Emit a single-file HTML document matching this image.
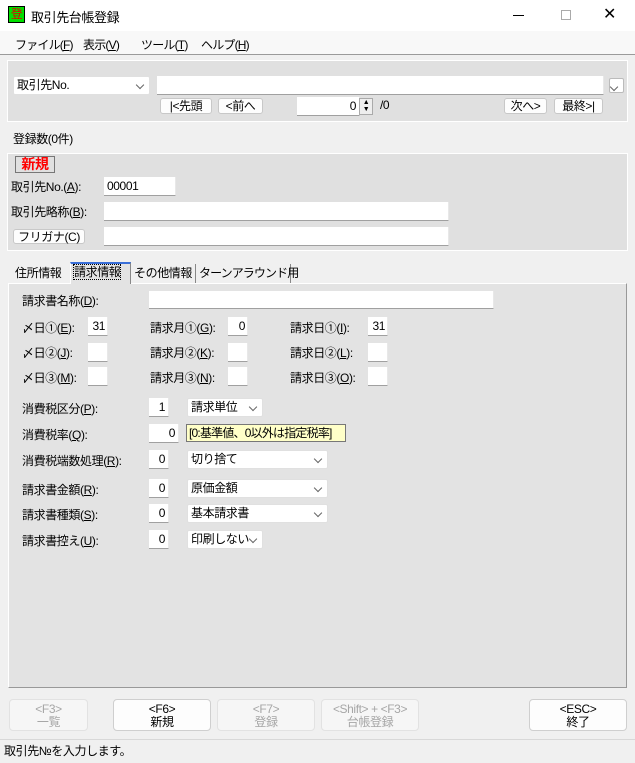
<!DOCTYPE html><html><head><meta charset="utf-8"><style>
*{box-sizing:border-box;margin:0;padding:0}
body{width:635px;height:763px;background:#f0f0f0;font-family:"Liberation Sans","Noto Sans CJK JP",sans-serif;font-size:12px;letter-spacing:-0.4px;color:#000;position:relative;overflow:hidden}
.a{position:absolute;white-space:nowrap}
.in{position:absolute;background:#fff;border-bottom:1px solid #a0a0a0;border-right:1px solid #e8e8e8;height:19px;font-size:12px;line-height:18px;padding:0 3px}
.btn{position:absolute;background:#fdfdfd;border:1px solid #c8c8c8;border-radius:3px;height:16px;font-size:12px;line-height:14px;text-align:center}
.sel{position:absolute;background:#fff;border:1px solid #e0e0e0;border-radius:2px;height:19px;line-height:17px;padding-left:3px}
.sel:after{content:"";position:absolute;right:6px;top:5px;width:5px;height:5px;border-right:1px solid #666;border-bottom:1px solid #666;transform:rotate(45deg)}
.r{text-align:right}
.fb{position:absolute;top:699px;height:32px;border:1px solid #cfcfcf;border-radius:4px;text-align:center;line-height:13px;padding-top:3px;font-size:12px}
.dis{background:#f6f6f6;color:#a6a6a6;border-color:#e2e2e2}
.en{background:#fdfdfd}
u{text-decoration:underline}
</style></head><body>
<div class="a" style="left:0;top:0;width:635px;height:31px;background:#fff"></div>
<div class="a" style="left:8px;top:6px;width:17px;height:17px;background:#00e000;border:1px solid #000;color:#e00000;font-size:12px;line-height:14px;text-align:center">登</div>
<div class="a" style="left:31px;top:7px;font-size:13px">取引先台帳登録</div>
<div class="a" style="left:513px;top:15px;width:11px;height:1px;background:#000"></div>
<div class="a" style="left:561px;top:10px;width:10px;height:10px;border:1px solid #aaa"></div>
<div class="a" style="left:603px;top:4px;font-size:16px;font-weight:300">✕</div>
<div class="a" style="left:0;top:31px;width:635px;height:24px;background:#f8f8f8;border-bottom:1px solid #9a9a9a"></div>
<div class="a" style="left:15px;top:36px;letter-spacing:-0.8px">ファイル(<u>F</u>)</div>
<div class="a" style="left:83px;top:36px;letter-spacing:-0.8px">表示(<u>V</u>)</div>
<div class="a" style="left:141px;top:36px;letter-spacing:-0.8px">ツール(<u>T</u>)</div>
<div class="a" style="left:201px;top:36px;letter-spacing:-0.8px">ヘルプ(<u>H</u>)</div>

<div class="a" style="left:7px;top:60px;width:621px;height:62px;background:#e0e0e0;border:1px solid #fff"></div>
<div class="sel" style="left:13px;top:76px;width:137px;height:19px">取引先No.</div>
<div class="in" style="left:157px;top:76px;width:447px"></div>
<div class="sel" style="left:609px;top:78px;width:15px;height:15px;border-color:#bbb"></div>
<div class="btn" style="left:160px;top:98px;width:52px">|&lt;先頭</div>
<div class="btn" style="left:218px;top:98px;width:45px">&lt;前へ</div>
<div class="in r" style="left:297px;top:97px;width:63px;padding-right:3px">0</div>
<div class="a" style="left:359px;top:98px;width:14px;height:17px;background:#eee;border:1px solid #aaa;font-size:7px;line-height:7px;text-align:center">▲<br>▼</div>
<div class="a" style="left:380px;top:98px">/0</div>
<div class="btn" style="left:504px;top:98px;width:43px">次へ&gt;</div>
<div class="btn" style="left:554px;top:98px;width:49px">最終&gt;|</div>

<div class="a" style="left:13px;top:130px">登録数(0件)</div>
<div class="a" style="left:7px;top:153px;width:621px;height:98px;background:#e0e0e0;border:1px solid #fff"></div>
<div class="a" style="left:15px;top:156px;width:40px;height:17px;border:1px solid #777;color:#f00;font-weight:bold;font-size:14px;line-height:15px;text-align:center">新規</div>
<div class="a" style="left:11px;top:178px">取引先No.(<u>A</u>):</div>
<div class="in" style="left:104px;top:177px;width:72px">00001</div>
<div class="a" style="left:11px;top:203px">取引先略称(<u>B</u>):</div>
<div class="in" style="left:104px;top:202px;width:345px"></div>
<div class="btn" style="left:13px;top:229px;width:72px;height:15px">フリガナ(C)</div>
<div class="in" style="left:104px;top:227px;width:345px"></div>

<div class="a" style="left:8px;top:283px;width:619px;height:405px;background:#e3e3e3;border:1px solid #fff;border-right-color:#999;border-bottom-color:#999"></div>
<div class="a" style="left:11px;top:264px;width:58px;height:19px;padding-left:4px">住所情報</div>
<div class="a" style="left:70px;top:262px;width:61px;height:22px;background:#e3e3e3;border:1px solid #fff;border-right-color:#888;border-bottom:none;border-top:2px solid #3a6fd8;padding-left:3px;line-height:17px"><span style="outline:1px dotted #000">請求情報</span></div>
<div class="a" style="left:131px;top:264px;width:65px;height:19px;border-right:1px solid #888;padding-left:3px">その他情報</div>
<div class="a" style="left:197px;top:264px;width:94px;height:19px;border-right:1px solid #888;padding-left:2px;letter-spacing:-0.9px">ターンアラウンド用</div>

<div class="a" style="left:22px;top:292px">請求書名称(<u>D</u>):</div>
<div class="in" style="left:149px;top:291px;width:345px;height:18px"></div>

<div class="a" style="left:22px;top:319px">〆日①(<u>E</u>):</div><div class="in r" style="left:88px;top:317px;width:20px;padding:0 2px 0 0">31</div>
<div class="a" style="left:150px;top:319px">請求月①(<u>G</u>):</div><div class="in r" style="left:228px;top:317px;width:20px;padding:0 2px 0 0">0</div>
<div class="a" style="left:290px;top:319px">請求日①(<u>I</u>):</div><div class="in r" style="left:368px;top:317px;width:20px;padding:0 2px 0 0">31</div>
<div class="a" style="left:22px;top:344px">〆日②(<u>J</u>):</div><div class="in" style="left:88px;top:343px;width:20px"></div>
<div class="a" style="left:150px;top:344px">請求月②(<u>K</u>):</div><div class="in" style="left:228px;top:343px;width:20px"></div>
<div class="a" style="left:290px;top:344px">請求日②(<u>L</u>):</div><div class="in" style="left:368px;top:343px;width:20px"></div>
<div class="a" style="left:22px;top:369px">〆日③(<u>M</u>):</div><div class="in" style="left:88px;top:367px;width:20px"></div>
<div class="a" style="left:150px;top:369px">請求月③(<u>N</u>):</div><div class="in" style="left:228px;top:367px;width:20px"></div>
<div class="a" style="left:290px;top:369px">請求日③(<u>O</u>):</div><div class="in" style="left:368px;top:367px;width:20px"></div>

<div class="a" style="left:22px;top:400px">消費税区分(<u>P</u>):</div><div class="in r" style="left:149px;top:398px;width:20px">1</div>
<div class="sel" style="left:187px;top:398px;width:76px">請求単位</div>
<div class="a" style="left:22px;top:426px">消費税率(<u>Q</u>):</div><div class="in r" style="left:149px;top:424px;width:30px">0</div>
<div class="a" style="left:186px;top:424px;width:160px;height:18px;background:#ffffc8;border:1px solid #777;line-height:16px;padding-left:2px;letter-spacing:-0.8px">[0:基準値、0以外は指定税率]</div>
<div class="a" style="left:22px;top:452px">消費税端数処理(<u>R</u>):</div><div class="in r" style="left:149px;top:450px;width:20px">0</div>
<div class="sel" style="left:187px;top:450px;width:141px">切り捨て</div>
<div class="a" style="left:22px;top:481px">請求書金額(<u>R</u>):</div><div class="in r" style="left:149px;top:479px;width:20px">0</div>
<div class="sel" style="left:187px;top:479px;width:141px">原価金額</div>
<div class="a" style="left:22px;top:506px">請求書種類(<u>S</u>):</div><div class="in r" style="left:149px;top:504px;width:20px">0</div>
<div class="sel" style="left:187px;top:504px;width:141px">基本請求書</div>
<div class="a" style="left:22px;top:532px">請求書控え(<u>U</u>):</div><div class="in r" style="left:149px;top:530px;width:20px">0</div>
<div class="sel" style="left:187px;top:530px;width:76px">印刷しない</div>

<div class="fb dis" style="left:9px;width:79px">&lt;F3&gt;<br>一覧</div>
<div class="fb en" style="left:113px;width:98px">&lt;F6&gt;<br>新規</div>
<div class="fb dis" style="left:217px;width:98px">&lt;F7&gt;<br>登録</div>
<div class="fb dis" style="left:321px;width:98px">&lt;Shift&gt; + &lt;F3&gt;<br>台帳登録</div>
<div class="fb en" style="left:529px;width:98px">&lt;ESC&gt;<br>終了</div>
<div class="a" style="left:0;top:739px;width:635px;height:1px;background:#d8d8d8"></div>
<div class="a" style="left:4px;top:742px">取引先№を入力します。</div>
</body></html>
